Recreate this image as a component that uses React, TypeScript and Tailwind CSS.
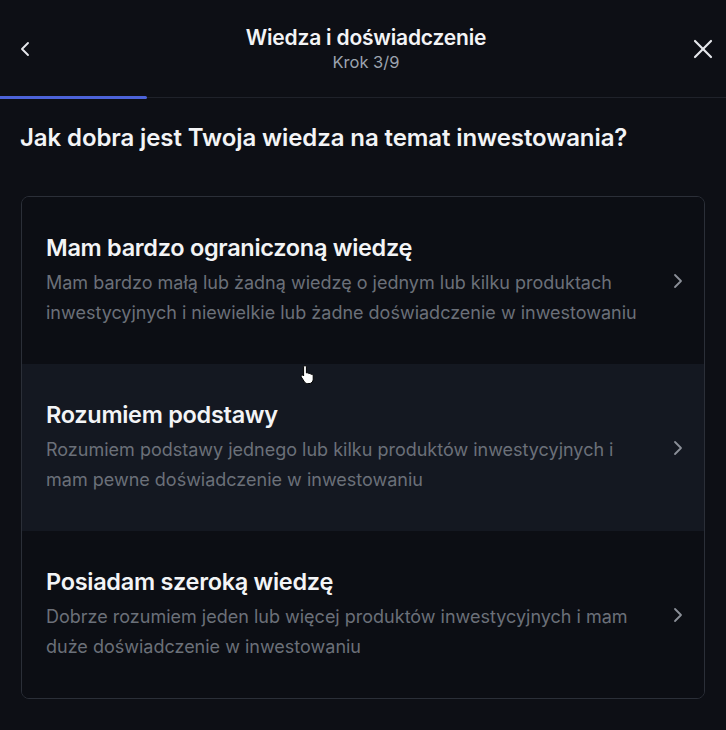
import { ChevronLeft, ChevronRight, X } from "lucide-react";

const options = [
  {
    title: "Mam bardzo ograniczoną wiedzę",
    desc: "Mam bardzo małą lub żadną wiedzę o jednym lub kilku produktach inwestycyjnych i niewielkie lub żadne doświadczenie w inwestowaniu",
  },
  {
    title: "Rozumiem podstawy",
    desc: "Rozumiem podstawy jednego lub kilku produktów inwestycyjnych i mam pewne doświadczenie w inwestowaniu",
    hover: true,
  },
  {
    title: "Posiadam szeroką wiedzę",
    desc: "Dobrze rozumiem jeden lub więcej produktów inwestycyjnych i mam duże doświadczenie w inwestowaniu",
  },
];

const App = () => {
  return (
    <div className="relative min-h-[730px] w-full bg-[#0d0f15] font-['Inter','Noto_Sans',sans-serif] text-white">
      {/* Header */}
      <div className="grid grid-cols-[1fr_auto_1fr] items-center pt-[25px] pb-[23px] pr-[7px] pl-[13px]">
        <button className="justify-self-start text-[#e5e7eb]">
          <ChevronLeft className="h-[24px] w-[24px]" strokeWidth={1.9} />
        </button>
        <div className="flex flex-col items-center">
          <h1 className="text-[21px] leading-[26px] font-semibold tracking-[-0.2px] text-[#f3f4f6]">
            Wiedza i doświadczenie
          </h1>
          <p className="text-[16.5px] leading-[22px] text-[#9ca3af]">Krok 3/9</p>
        </div>
        <button className="justify-self-end text-[#e5e7eb]">
          <X className="h-[32px] w-[32px]" strokeWidth={1.6} />
        </button>
      </div>

      {/* Progress */}
      <div className="flex h-[3px] items-center">
        <div className="h-[3px] w-[147px] rounded-r-full bg-[#4c63d9]" />
        <div className="h-px flex-1 bg-[#1f222a]" />
      </div>

      {/* Question */}
      <h2 className="px-5 pt-[24px] text-[24px] leading-[30px] font-semibold tracking-[-0.1px] text-[#f3f4f6]">
        Jak dobra jest Twoja wiedza na temat inwestowania?
      </h2>

      {/* Options */}
      <div className="mx-[21px] mt-[43px] overflow-hidden rounded-[8px] border border-[#2b2f38]">
        {options.map((o) => (
          <div
            key={o.title}
            className={`flex h-[167px] items-center pr-[14px] pl-[24px] ${
              o.hover ? "bg-[#141821]" : "bg-[#0c0e14]"
            }`}
          >
            <div className="w-[598px]">
              <h3 className="text-[23.5px] leading-[30px] font-semibold tracking-[-0.3px] text-[#f3f4f6]">
                {o.title}
              </h3>
              <p className="mt-[5px] text-[18px] leading-[30px] text-[#6b7079]">{o.desc}</p>
            </div>
            <div className="flex-1" />
            <ChevronRight className="h-[24px] w-[24px] shrink-0 text-[#8b8f98]" strokeWidth={1.8} />
          </div>
        ))}
      </div>

      {/* Cursor */}
      <svg
        className="absolute top-[364px] left-[300px]"
        width="16"
        height="20"
        viewBox="0 0 16 20"
      >
        <path
          d="M5 1.5c.8 0 1.4.6 1.4 1.4v6l1-.1c.6 0 1.2.3 1.4.8l.8-.1c.6 0 1.1.3 1.3.8h.7c.9 0 1.6.7 1.6 1.6v3.4c0 2.4-1.8 4.3-4.2 4.3H7.6c-1.3 0-2.4-.6-3.1-1.6L1.3 13c-.4-.6-.3-1.3.2-1.7.5-.4 1.2-.3 1.6.1l.5.6V2.9C3.6 2.1 4.2 1.5 5 1.5z"
          fill="#fff"
          stroke="#000"
          strokeWidth="1"
        />
      </svg>
    </div>
  );
};

export default App;
